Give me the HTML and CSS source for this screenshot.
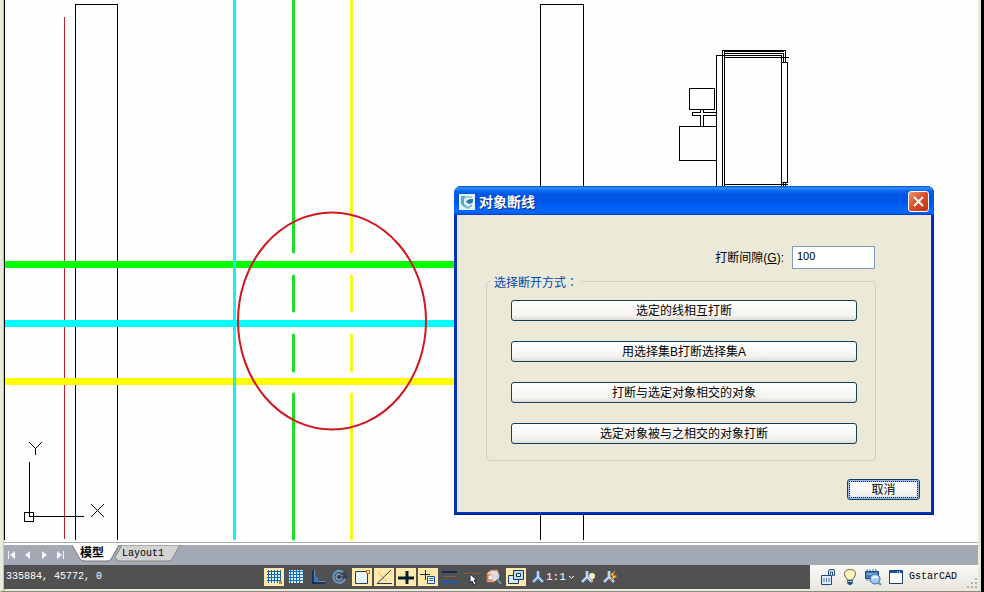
FILE: index.html
```html
<!DOCTYPE html>
<html lang="zh-CN">
<head>
<meta charset="utf-8">
<title>GstarCAD</title>
<link rel="stylesheet" href="styles.css">
</head>
<body>
<div class="app">
  <main class="canvas">
    <svg class="drawing" width="973" height="541" viewBox="4 0 973 541" fill="none" stroke="#000" shape-rendering="crispEdges" aria-hidden="true">
      <path d="M4.500 0V540"/>
      <path d="M64.500 17V539" stroke="#c02028"/>
      <path d="M75.500 540V4.500H117.500V540M540.500 540V4.500H583.500V540"/>
      <path d="M293.500 0V252" stroke="#1edf28" stroke-width="3"/>
      <path d="M351.500 0V252" stroke="#faf51e" stroke-width="3"/>
      <g stroke-width="3" stroke-linecap="round" shape-rendering="auto">
        <path stroke="#1edf28" d="M293.500 248V252M293.500 276V311M293.500 335V371M293.500 394V539"/>
        <path stroke="#faf51e" d="M351.500 248V252M351.500 276V311M351.500 335V371M351.500 394V539"/>
      </g>
      <path d="M5 264.500H460" stroke="#0f0" stroke-width="7"/>
      <path d="M5 323.500H460" stroke="#0ff" stroke-width="7"/>
      <path d="M5 381.500H460" stroke="#ff0" stroke-width="7"/>
      <path d="M234.500 0V540" stroke="#14f0fa" stroke-width="3"/>
      <ellipse cx="332" cy="321" rx="94" ry="108.500" stroke="#d01820" stroke-width="2" shape-rendering="auto"/>
      <path d="M29.500 462V516.500H84M24.500 512.500H33.500V521.500H24.500ZM29 442L35.500 448.500L42 442M35.500 448.500V455M91 504L104 517M104 504L91 517"/>
      <path d="M689.500 88.500H714.500V109.500H689.500ZM716.500 126.500H679.500V160.500H716.500M700.500 110V112.500H692.500V115.500H700.500V126M703.500 110V112.500H716M703.500 126V115.500H716"/>
      <path d="M716.500 190V55.500H722M722.500 190V50.500H785.500V62M724.500 190V52M724 51.500H784M724 53.500H783.500V62M716 55.500H781.500V190M724 57.500H789M781.500 62.500H787.500V182.500H781.500M724 184.500H788M783.500 183V190M785.500 183V190"/>
    </svg>
    <section class="dialog" role="dialog" aria-labelledby="dialog-title">
      <header class="titlebar">
        <svg width="16" height="16" viewBox="0 0 16 16" aria-hidden="true">
          <rect width="16" height="16" fill="#e2f3f8"/>
          <path d="M2 2H7L5 5V10L9 13H5L2 10Z" fill="#5ba6c4"/>
          <path d="M7 2H13V4H8L6 6Z" fill="#9ad1e2"/>
          <path d="M7 7L11 5H14V8L11 10L8 9Z" fill="#237aab"/>
          <path d="M5 11L9 13L13 10V12L9 15L5 13Z" fill="#74b9d3"/>
        </svg>
        <h1 id="dialog-title">对象断线</h1>
        <button class="close" type="button" aria-label="关闭">
          <svg width="19" height="19" viewBox="0 0 19 19" aria-hidden="true"><path d="M5 5L14 14M14 5L5 14" stroke="#fff" stroke-width="2"/></svg>
        </button>
      </header>
      <form class="dialog-body">
        <div class="gap-row">
          <label for="gap">打断间隙(<u>G</u>):</label>
          <input id="gap" type="text" value="100">
        </div>
        <fieldset>
          <legend>选择断开方式<span class="colon" lang="zh-TW">：</span></legend>
          <button class="push" type="button">选定的线相互打断</button>
          <button class="push" type="button">用选择集B打断选择集A</button>
          <button class="push" type="button">打断与选定对象相交的对象</button>
          <button class="push" type="button">选定对象被与之相交的对象打断</button>
        </fieldset>
        <button class="push cancel" type="button">取消</button>
      </form>
    </section>
  </main>
  <nav class="tabs">
    <button class="nav" type="button" aria-label="第一个"><svg width="8" height="8"><path d="M0 0H1V8H0ZM7 0V8L2 4Z"/></svg></button>
    <button class="nav" type="button" aria-label="上一个"><svg width="8" height="8"><path d="M6 0V8L1 4Z"/></svg></button>
    <button class="nav" type="button" aria-label="下一个"><svg width="8" height="8"><path d="M2 0V8L7 4Z"/></svg></button>
    <button class="nav" type="button" aria-label="最后一个"><svg width="8" height="8"><path d="M1 0V8L6 4ZM7 0H8V8H7Z"/></svg></button>
    <button class="tab active" type="button">
      <svg viewBox="0 0 48 17" preserveAspectRatio="none" aria-hidden="true"><path d="M0 0L8 14Q10 16 13 16H35Q38 16 39 14L47 0" fill="#fff" stroke="#777"/></svg>
      <span>模型</span></button>
    <button class="tab layout" type="button">
      <svg viewBox="0 0 66 17" preserveAspectRatio="none" aria-hidden="true"><path d="M7 0L0 12L3 16H53Q56 16 57 14L65 0Z" fill="#d3d3d3" stroke="#858585"/></svg>
      <span>Layout1</span></button>
  </nav>
  <footer class="status">
    <output class="coords">335884, 45772, 0</output>
    <div class="tools">
      <button class="tool on" type="button" aria-label="捕捉"><svg viewBox="0 0 20 18"><path d="M3 3H16V15H3Z" fill="#dff4ff"/><path d="M3 3.500H17M3 6.500H17M3 9.500H17M3 12.500H17M4.500 2V15M7.500 2V15M10.500 2V15M13.500 2V15M16.500 2V12" stroke="#16639f"/><path d="M15.500 13.500H17.500V15.500H15.500Z" stroke="#a86814"/></svg></button>
      <button class="tool" type="button" aria-label="栅格"><svg viewBox="0 0 20 18"><path d="M3 2H17V15H3Z" fill="#d7f0ff"/><path d="M3 3.500H17M3 6.500H17M3 9.500H17M3 12.500H17M4.500 2V15M7.500 2V15M10.500 2V15M13.500 2V15" stroke="#1771bf"/></svg></button>
      <button class="tool" type="button" aria-label="正交"><svg viewBox="0 0 20 18"><path d="M5 2V15H17" stroke="#1c3557" stroke-width="2"/><path d="M6.500 2V13.500H17" stroke="#6d8db5"/><path d="M6 9H10V14H6Z" fill="#387bc0"/></svg></button>
      <button class="tool" type="button" aria-label="极轴"><svg viewBox="0 0 20 18"><path d="M14 5A6 6 0 1 0 15 11" stroke="#6a9bd0" stroke-width="2"/><circle cx="9" cy="9" r="3" stroke="#9abce4"/><path d="M8 9L16 3M8 9H18M13 4L16 9" stroke="#183863"/></svg></button>
      <button class="tool on" type="button" aria-label="对象捕捉"><svg viewBox="0 0 20 18"><path d="M3.500 3.500H15.500V15.500H3.500Z" fill="#e9f4ff" stroke="#243b63"/><path d="M14.500 2.500H17.500V5.500H14.500Z" fill="#ffe19c" stroke="#c57719"/></svg></button>
      <button class="tool on" type="button" aria-label="对象追踪"><svg viewBox="0 0 20 18"><path d="M17 2L3 15.500H18" stroke="#26384f"/><path d="M5 5L12 13" stroke="#b7a46a" stroke-dasharray="2 1"/></svg></button>
      <button class="tool on" type="button" aria-label="动态坐标"><svg viewBox="0 0 20 18"><path d="M2 10H18M11 3V16" stroke="#071c31" stroke-width="3"/></svg></button>
      <button class="tool on" type="button" aria-label="动态输入"><svg viewBox="0 0 20 18"><path d="M2 6.500H12M7.500 2V12" stroke="#14283c"/><path d="M9.500 8.500H16.500V15.500H9.500Z" fill="#eff8ff" stroke="#164e9c"/><path d="M11 10.500H15M11 12.500H15" stroke="#2b66b4"/></svg></button>
      <button class="tool" type="button" aria-label="线宽"><svg viewBox="0 0 20 18"><path d="M2 4H17" stroke="#14264d" stroke-width="2"/><path d="M2 8.500H17" stroke="#7a604d"/><path d="M2 14H17" stroke="#1e59bd" stroke-width="2"/></svg></button>
      <button class="tool" type="button" aria-label="选择循环"><svg viewBox="0 0 20 18"><path d="M2 5.500H17" stroke="#925c3b"/><path d="M8 6V15L10 13L12 17L14 16L12 12H15Z" fill="#fff" stroke="#17273b"/></svg></button>
      <button class="tool" type="button" aria-label="快速查看"><svg viewBox="0 0 20 18"><path d="M3 5L7 2H14V10L10 14H3Z" fill="#ead2bd" stroke="#c0623a"/><path d="M4 7H9V12H4Z" fill="#fff" stroke="#bf5d30"/><circle cx="11" cy="8" r="4" fill="#dce9f4" fill-opacity=".6" stroke="#d4e5f4"/><path d="M13 11L17 16" stroke="#739bc2" stroke-width="2"/></svg></button>
      <button class="tool on" type="button" aria-label="注释监视"><svg viewBox="0 0 20 18"><path d="M2.500 7.500H12.500V15.500H2.500Z" fill="#d9eaf9" stroke="#19365d"/><path d="M7.500 2.500H17.500V11.500H7.500Z" fill="#bcdcf5" stroke="#19365d"/><path d="M10.500 5.500H14.500V8.500H10.500Z" fill="#fff" stroke="#19365d"/></svg></button>
      <button class="scale" type="button"><svg width="12" height="14" viewBox="0 0 12 14"><path d="M6 1V7L1 12M6 7L11 12" stroke="#79aceb" stroke-width="3"/><path d="M6 1V7L1 12M6 7L11 12" stroke="#e6f3ff"/></svg><span>1:1</span><svg width="7" height="4" viewBox="0 0 7 4"><path d="M1 1L3.500 3L6 1" stroke="#fff"/></svg></button>
      <button class="tool" type="button" aria-label="注释可见性"><svg viewBox="0 0 20 18"><path d="M8 3V9L3 14M8 9L13 14" stroke="#86b6eb" stroke-width="3"/><path d="M8 3V9L3 14M8 9L13 14" stroke="#f1f8ff"/><circle cx="13" cy="8" r="3" fill="#fff1be"/><path d="M12 11H14V14H12Z" fill="#c9b276"/></svg></button>
      <button class="tool" type="button" aria-label="自动添加比例"><svg viewBox="0 0 20 18"><path d="M8 3V9L3 14M8 9L13 14" stroke="#86b6eb" stroke-width="3"/><path d="M8 3V9L3 14M8 9L13 14" stroke="#f1f8ff"/><path d="M14 3L9 7L12 8L9 13L16 8L12 7Z" fill="#ffd476" stroke="#bd771b"/></svg></button>
    </div>
    <div class="tray">
      <svg width="16" height="18" viewBox="0 0 16 18"><path d="M8.500 8V3Q8.500 1.500 10 1.500H13Q14.500 1.500 14.500 3V7.500H12.500V4H10.500V8" fill="#cfe0f4" stroke="#31547f"/><path d="M1.500 7.500H11.500V16.500H1.500Z" fill="#dcecff" stroke="#1c4689"/><path d="M4 10V14M6.500 10V14M9 10V14" stroke="#4b79b8"/></svg>
      <svg width="14" height="18" viewBox="0 0 14 18"><path d="M4.500 12L2 8Q0 1.500 7 1.500T12 8L9.500 12Z" fill="#fff5bd" stroke="#716940"/><path d="M4 12H10V15L8 17H6L4 15Z" fill="#254d7e"/><path d="M4 13.500H10" stroke="#a5c0df"/></svg>
      <svg width="18" height="18" viewBox="0 0 18 18"><path d="M3 1V13M6 1V13M9 1V13M12 1V13" stroke="#3976b4"/><path d="M1.500 3.500H14.500V10.500H1.500Z" fill="#487bb5" stroke="#204878"/><path d="M3 6H13" stroke="#a9d3f5"/><circle cx="11" cy="11" r="5" fill="#a6c7ec" stroke="#376ba7"/><path d="M8 11Q11 7 14 10" stroke="#e9f6ff" stroke-width="2"/><path d="M14 14L17 17" stroke="#668fb7" stroke-width="2"/></svg>
      <svg width="14" height="14" viewBox="0 0 14 14"><path d="M.500 .500H13.500V13.500H.500Z" fill="#fff" stroke="#183d75"/><path d="M1 1H13V3H1Z" fill="#1955a3"/><path d="M8 2H12" stroke="#fff" stroke-dasharray="1 1"/></svg>
      <span>GstarCAD</span>
      <svg class="grip" width="12" height="12" viewBox="0 0 12 12"><path d="M9 1H11V3H9ZM5 5H7V7H5ZM9 5H11V7H9ZM1 9H3V11H1ZM5 9H7V11H5ZM9 9H11V11H9Z" fill="#b6b4aa"/></svg>
    </div>
  </footer>
</div>
</body>
</html>
```

FILE: styles.css
```css
* {
  box-sizing: border-box;
}

body {
  margin: 0;
  background: #000;
  color: #000;
  font: 12px/16px "Liberation Sans", "Noto Sans CJK SC", sans-serif;
}

button,
input {
  font: inherit;
  color: inherit;
  margin: 0;
}

button {
  padding: 0;
  border: 0;
  background: none;
}

svg {
  display: block;
  fill: none;
  flex: none;
}

.app {
  display: flex;
  flex-direction: column;
  height: 100vh;
  margin-right: 3px;
  padding: 0 3px 2px;
  border-left: 1px solid #e9ecdb;
  border-bottom: 1px solid #8b8b83;
  background: linear-gradient(90deg, #e9ecdb 2px, #999 3px, #ece9d8 4px);
}

.canvas {
  position: relative;
  flex: 1;
  min-height: 0;
  overflow: hidden;
  background: #fdfefd;
  border-bottom: 1px solid #aaa;
}

.dialog {
  position: absolute;
  left: 450px;
  top: 186px;
  width: 480px;
  padding: 0 3px 3px;
  border-radius: 7px 7px 0 0;
  background: #0831b8;
  box-shadow: inset -1px -1px #001c92;
}

.titlebar {
  display: flex;
  align-items: center;
  gap: 4px;
  height: 29px;
  margin: 0 -3px;
  padding: 2px 5px 0 5px;
  border-radius: 7px 7px 0 0;
  background: linear-gradient(#0748bc 0, #3391ff 7%, #0869f2 16%, #0054e3 30%, #0055e8 55%, #0266ff 80%, #0264fa 92%, #003dcc 100%);
}

.titlebar h1 {
  flex: 1;
  margin: 0;
  color: #fff;
  font-size: 14px;
  line-height: 18px;
  font-weight: 700;
  text-shadow: 1px 1px #0b2f81;
}

.close {
  width: 21px;
  height: 21px;
  border: 1px solid #fff;
  border-radius: 3px;
  background: linear-gradient(135deg, #ee9275, #d94c24 50%, #bf3514);
}

.dialog-body {
  display: flex;
  flex-direction: column;
  padding: 31px 11px 12px 29px;
  background: #ece9d8;
}

.gap-row {
  display: flex;
  align-items: center;
  justify-content: flex-end;
  gap: 8px;
  margin-right: 45px;
}

.gap-row input {
  width: 83px;
  height: 23px;
  padding: 0 4px 3px;
  border: 1px solid #7f9db9;
  background: #fff;
  font-size: 11px;
}

fieldset {
  position: relative;
  display: flex;
  flex-direction: column;
  gap: 20px;
  min-width: 0;
  margin: 12px 44px 18px 0;
  padding: 18px 18px 16px 24px;
  border: 1px solid #d0d0bf;
  border-radius: 4px;
}

legend {
  position: absolute;
  top: -8px;
  left: 4px;
  padding: 0 3px;
  background: #ece9d8;
  color: #0046b5;
}

.colon {
  font-family: "Noto Sans CJK TC", sans-serif;
}

.push {
  height: 21px;
  padding-top: 1px;
  border: 1px solid #113f5c;
  border-radius: 3px;
  background: linear-gradient(#fff, #f5f4f0 75%, #dddcd5);
  line-height: 18px;
}

.cancel {
  align-self: flex-end;
  width: 73px;
  box-shadow: inset 0 0 0 2px #9dbbec;
  outline: 1px dotted #222;
  outline-offset: -3px;
}

.tabs {
  display: flex;
  flex: none;
  height: 22px;
  border-top: 2px solid #fff;
  padding-left: 4px;
  background: #a4aab5;
}

.nav {
  display: flex;
  align-items: center;
  width: 16px;
}

.nav svg {
  fill: #f4f6fa;
}

.tab {
  position: relative;
  height: 17px;
  font: 10px/16px "Liberation Mono", "Noto Sans CJK SC", monospace;
}

.tab svg {
  position: absolute;
  inset: 0;
  width: 100%;
  height: 100%;
}

.tab span {
  position: relative;
}

.active {
  z-index: 1;
  width: 48px;
  padding-right: 8px;
  font-size: 12px;
  font-weight: 700;
}

.layout {
  width: 66px;
  margin-left: -5px;
  padding-right: 10px;
}

.status {
  display: flex;
  align-items: center;
  flex: none;
  height: 24px;
  background: #515151;
  color: #fff;
  font: 10px/16px "Liberation Mono", monospace;
}

.coords {
  width: 260px;
  padding-left: 2px;
}

.tools {
  display: flex;
  align-items: center;
  flex: 1;
  gap: 2px;
}

.tool {
  width: 20px;
  height: 18px;
}

.on {
  background: #ffe9ab;
}

.scale {
  display: flex;
  align-items: center;
  gap: 2px;
  padding: 0 2px 0 4px;
  font-size: 11px;
}

.tray {
  display: flex;
  align-items: center;
  gap: 7px;
  align-self: stretch;
  width: 168px;
  padding-left: 10px;
  background: linear-gradient(#fafaf6, #e8e7df);
  color: #000;
}

.tray span {
  margin-left: -1px;
}

.grip {
  align-self: flex-end;
  margin-left: auto;
}
```
